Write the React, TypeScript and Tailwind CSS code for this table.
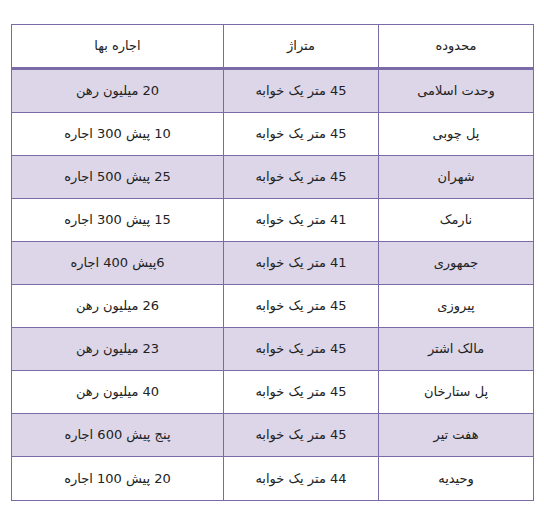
const rows = [
  ["وحدت اسلامی", "45 متر یک خوابه", "20 میلیون رهن"],
  ["پل چوبی", "45 متر یک خوابه", "10 پیش 300 اجاره"],
  ["شهران", "45 متر یک خوابه", "25 پیش 500 اجاره"],
  ["نارمک", "41 متر یک خوابه", "15 پیش 300 اجاره"],
  ["جمهوری", "41 متر یک خوابه", "6پیش 400 اجاره"],
  ["پیروزی", "45 متر یک خوابه", "26 میلیون رهن"],
  ["مالک اشتر", "45 متر یک خوابه", "23 میلیون رهن"],
  ["پل ستارخان", "45 متر یک خوابه", "40 میلیون رهن"],
  ["هفت تیر", "45 متر یک خوابه", "پنج پیش 600 اجاره"],
  ["وحیدیه", "44 متر یک خوابه", "20 پیش 100 اجاره"],
];

export default function App() {
  return (
    <div className="min-h-[509px] w-[544px] bg-white pl-[11px] pt-[24px] text-[13px] text-[#222] [font-family:'DejaVu_Sans',Tahoma,sans-serif]">
      <div dir="rtl" className="w-[523px] border border-[#7a6aa6]">
        {/* سرستون */}
        <div className="grid h-[45px] grid-cols-[154px_155px_1fr] border-b-[3px] border-[#7a6aa6] bg-white">
          <div className="flex items-center justify-center">محدوده</div>
          <div className="flex items-center justify-center border-r border-[#7a6aa6]">متراژ</div>
          <div className="flex items-center justify-center border-r border-[#7a6aa6]">اجاره بها</div>
        </div>
        {rows.map((r, i) => (
          <div
            key={i}
            className={`grid h-[43px] grid-cols-[154px_155px_1fr] border-[#7a6aa6] ${i < rows.length - 1 ? "border-b" : ""} ${i % 2 === 0 ? "bg-[#ddd6e8]" : "bg-white"}`}
          >
            <div className="flex items-center justify-center">{r[0]}</div>
            <div className="flex items-center justify-center border-r border-[#7a6aa6]">{r[1]}</div>
            <div className="flex items-center justify-center border-r border-[#7a6aa6]">{r[2]}</div>
          </div>
        ))}
      </div>
    </div>
  );
}
